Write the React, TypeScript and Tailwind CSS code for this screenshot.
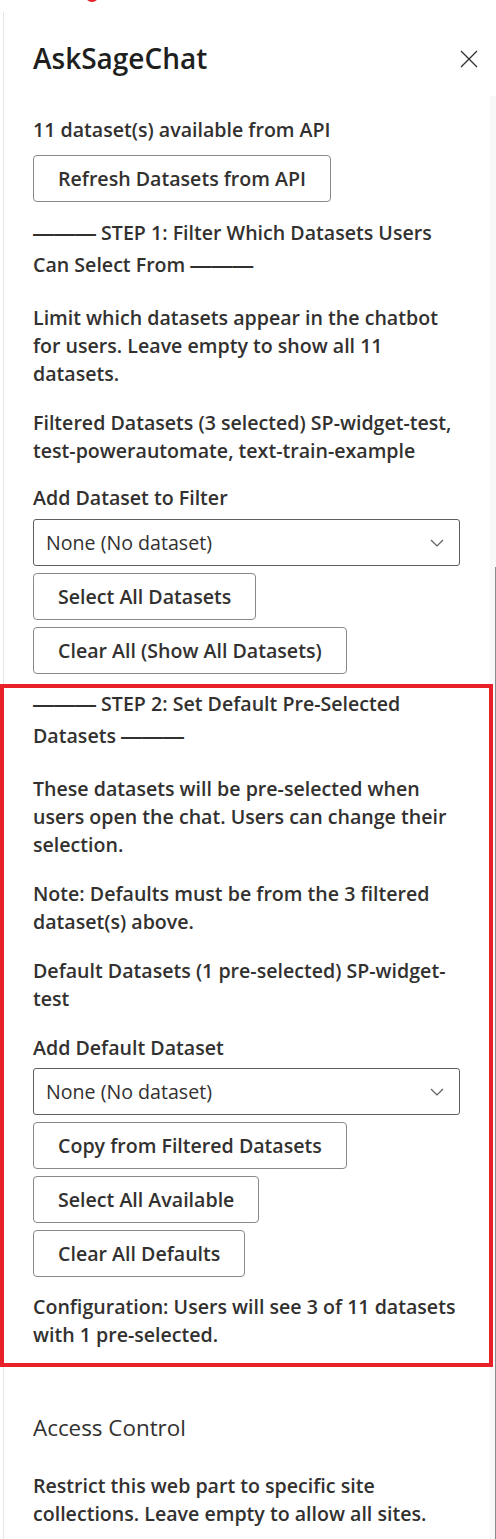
import React from 'react';

const FONT = "[font-family:'Open_Sans','Noto_Sans',sans-serif]";

function OutlineButton({ text }: { text: string }) {
  return (
    <button
      type="button"
      className="mt-[7px] flex h-[47px] items-center rounded-[4px] border border-[#8a8886] bg-white px-[24px] text-[19.6px] font-semibold leading-[28px] text-[#323130]"
    >
      {text}
    </button>
  );
}

function Dropdown({ className = '' }: { className?: string }) {
  return (
    <div
      className={`flex h-[47px] w-full items-center justify-between rounded-[3px] border border-[#605e5c] bg-white pl-[12px] pr-[15px] ${className}`}
    >
      <span className="text-[19.6px] leading-[28px] text-[#323130]">None (No dataset)</span>
      <svg width="14" height="8" viewBox="0 0 14 8" fill="none">
        <path d="M1 1l6 6 6-6" stroke="#605e5c" strokeWidth="1.2" />
      </svg>
    </div>
  );
}

// em-dash run: Liberation Sans draws em-dashes edge to edge, so the three join into one rule
function Dashes() {
  return <span className="[font-family:'Liberation_Sans',sans-serif] text-[21px] font-bold">———</span>;
}

function StepHeading({ children, className = '' }: { children: React.ReactNode; className?: string }) {
  return <p className={`text-[19.6px] font-semibold leading-[32px] ${className}`}>{children}</p>;
}

function Para({ children, className = '' }: { children: React.ReactNode; className?: string }) {
  return <p className={`text-[19.6px] font-semibold leading-[28px] ${className}`}>{children}</p>;
}

export default function App() {
  return (
    <div className={`relative h-[1539px] w-[496px] overflow-hidden bg-white text-[#323130] ${FONT}`}>
      {/* notification dot peeking from the top bar */}
      <div className="absolute left-[85px] top-[-12px] h-[14px] w-[14px] rounded-full bg-[#e3202a]" />

      {/* scrollbar */}
      <div className="absolute bottom-0 right-0 top-[96px] w-[6px] bg-[#f8f8f8]" />
      <div className="absolute bottom-0 right-0 top-[567px] w-[1.5px] bg-[#8a8a8a]" />

      <div className="ml-[3px] mt-[12px] h-[1527px] border-l border-[#e6e6e6] pt-[26px]">
        <div className="flex h-[40px] items-center justify-between pl-[29px] pr-[18px]">
          <h1 className="text-[28px] font-semibold leading-[40px] text-[#201f1e]">AskSageChat</h1>
          <svg width="18" height="18" viewBox="0 0 18 18" fill="none" className="mt-[2px]">
            <path d="M1 1l16 16M17 1L1 17" stroke="#323130" strokeWidth="1.3" />
          </svg>
        </div>

        <div className="flex flex-col items-start pl-[29px] pr-[36px]">
          <Para className="mt-[38px]">11 dataset(s) available from API</Para>
          <div className="mt-[4px]">
            <OutlineButton text="Refresh Datasets from API" />
          </div>

          <StepHeading className="mt-[15px]">
            <Dashes /> STEP 1: Filter Which Datasets Users Can Select From <Dashes />
          </StepHeading>
          <Para className="mt-[23px]">
            Limit which datasets appear in the chatbot for users. Leave empty to show all 11 datasets.
          </Para>
          <Para className="mt-[21px]">
            Filtered Datasets (3 selected) SP-widget-test, test-powerautomate, text-train-example
          </Para>
          <Para className="mt-[19px]">Add Dataset to Filter</Para>
          <Dropdown className="mt-[7px]" />
          <OutlineButton text="Select All Datasets" />
          <OutlineButton text="Clear All (Show All Datasets)" />

          <div className="relative -ml-[33px] mt-[10px] flex w-[493px] flex-col items-start border-4 border-[#e8202a] bg-white pb-[14px] pl-[29px] pr-[29px]">
            <StepHeading>
              <Dashes /> STEP 2: Set Default Pre-Selected Datasets <Dashes />
            </StepHeading>
            <Para className="mt-[23px]">
              These datasets will be pre-selected when users open the chat. Users can change their selection.
            </Para>
            <Para className="mt-[21px]">Note: Defaults must be from the 3 filtered dataset(s) above.</Para>
            <Para className="mt-[21px]">Default Datasets (1 pre-selected) SP-widget-test</Para>
            <Para className="mt-[21px]">Add Default Dataset</Para>
            <Dropdown className="mt-[6px]" />
            <OutlineButton text="Copy from Filtered Datasets" />
            <OutlineButton text="Select All Available" />
            <OutlineButton text="Clear All Defaults" />
            <Para className="mt-[16px]">Configuration: Users will see 3 of 11 datasets with 1 pre-selected.</Para>
          </div>

          <h2 className="mt-[45px] text-[22.4px] leading-[31px] text-[#323130]">Access Control</h2>
          <Para className="mt-[29px]">
            Restrict this web part to specific site collections. Leave empty to allow all sites.
          </Para>
        </div>
      </div>
    </div>
  );
}
